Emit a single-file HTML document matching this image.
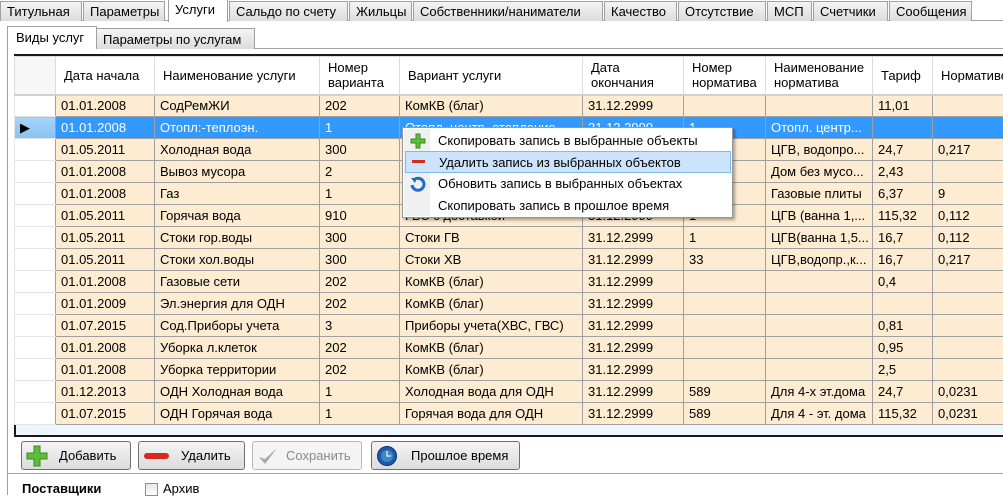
<!DOCTYPE html><html><head><meta charset="utf-8"><style>
*{box-sizing:border-box;margin:0;padding:0}
body{width:1003px;height:495px;overflow:hidden;background:#fff;font:13px "Liberation Sans",sans-serif;color:#000;position:relative}
.tabs{position:absolute;left:0;top:0;height:21px;width:1003px;border-bottom:1px solid #a0a0a0;background:#fff}
.tab{position:absolute;top:1px;height:20px;background:linear-gradient(#f4f4f4,#dcdcdc);border:1px solid #a0a0a0;border-bottom:none;padding:2px 6px;white-space:nowrap}
.tab.act{top:-1px;height:23px;background:#fff;z-index:2}
.stab{position:absolute;height:21px;border:1px solid #a0a0a0;border-bottom:none;padding:3px 6px;white-space:nowrap}
.wrap{position:absolute;left:14px;top:56px;width:989px;height:380px;overflow:hidden}
table{position:absolute;left:0;top:0;width:997px;border-collapse:collapse;table-layout:fixed}
td{border:1px solid #a0a0a0;height:22px;padding:0 4px 0 5px;white-space:nowrap;overflow:hidden;background:#fdebd2}
th{border:1px solid #dcdcdc;border-bottom:2px solid #d0d0d0;height:38px;font-weight:normal;text-align:left;padding:0 4px 0 8px;background:#fff;line-height:15px;vertical-align:middle;white-space:nowrap;overflow:hidden}
td.rh{background:#fff;border:1px solid #e4e4e4;border-right:1px solid #a0a0a0}
tr.sel td{background:#3399ff;color:#fff}
tr.sel td.rh{background:linear-gradient(#a8d4f8,#86c2f2);color:#000}
.menu{position:absolute;left:402px;top:127px;width:331px;height:91px;background:#fff;border:1px solid #979797;box-shadow:2px 2px 3px rgba(0,0,0,.35);z-index:5}
.menu .strip{position:absolute;left:1px;top:1px;bottom:1px;width:26px;background:#f0f0f0}
.mi{position:absolute;left:2px;width:326px;height:22px;padding:3px 0 0 33px}
.mi.h{background:#cce4fb;border:1px solid #80b9ee}
.btn{position:absolute;top:441px;height:29px;border:1px solid #707070;border-radius:3px;background:linear-gradient(#f4f4f4,#dcdcdc);padding-top:6px}
</style></head><body>
<div class="tabs">
<div class="tab" style="left:0;width:82px">Титульная</div>
<div class="tab" style="left:83px;width:82px">Параметры</div>
<div class="tab act" style="left:168px;width:60px">Услуги</div>
<div class="tab" style="left:229px;width:119px">Сальдо по счету</div>
<div class="tab" style="left:349px;width:63px">Жильцы</div>
<div class="tab" style="left:413px;width:190px">Собственники/наниматели</div>
<div class="tab" style="left:604px;width:73px">Качество</div>
<div class="tab" style="left:678px;width:88px">Отсутствие</div>
<div class="tab" style="left:767px;width:45px">МСП</div>
<div class="tab" style="left:813px;width:75px">Счетчики</div>
<div class="tab" style="left:889px;width:83px">Сообщения</div>
</div>
<div style="position:absolute;left:7px;top:48px;width:1px;height:447px;background:#a0a0a0"></div>
<div style="position:absolute;left:7px;top:48px;width:996px;height:1px;background:#a0a0a0"></div>
<div class="stab" style="left:7px;top:26px;width:90px;height:23px;background:#fff;z-index:2;padding-left:8px">Виды услуг</div>
<div class="stab" style="left:96px;top:28px;width:159px;background:linear-gradient(#f4f4f4,#dcdcdc)">Параметры по услугам</div>
<div style="position:absolute;left:14px;top:54px;width:995px;height:383px;border:2px solid #1a1a1a;background:#eef5fd"></div>
<div class="wrap">
<table>
<colgroup><col style="width:41px"><col style="width:99px"><col style="width:165px"><col style="width:80px"><col style="width:183px"><col style="width:101px"><col style="width:82px"><col style="width:107px"><col style="width:60px"><col style="width:79px"></colgroup>
<tr><th style="background:#f7f7f7"></th><th>Дата начала</th><th>Наименование услуги</th><th>Номер<br>варианта</th><th>Вариант услуги</th><th>Дата<br>окончания</th><th>Номер<br>норматива</th><th>Наименование<br>норматива</th><th>Тариф</th><th>Нормативе</th></tr>
<tr><td class="rh"></td><td>01.01.2008</td><td>СодРемЖИ</td><td>202</td><td>КомКВ (благ)</td><td>31.12.2999</td><td></td><td></td><td>11,01</td><td></td></tr>
<tr class="sel"><td class="rh">&#9654;</td><td>01.01.2008</td><td>Отопл:-теплоэн.</td><td>1</td><td>Отопл. центр. отопление</td><td>31.12.2999</td><td>1</td><td>Отопл. центр...</td><td></td><td></td></tr>
<tr><td class="rh"></td><td>01.05.2011</td><td>Холодная вода</td><td>300</td><td></td><td></td><td></td><td>ЦГВ, водопро...</td><td>24,7</td><td>0,217</td></tr>
<tr><td class="rh"></td><td>01.01.2008</td><td>Вывоз мусора</td><td>2</td><td></td><td></td><td></td><td>Дом без мусо...</td><td>2,43</td><td></td></tr>
<tr><td class="rh"></td><td>01.01.2008</td><td>Газ</td><td>1</td><td></td><td></td><td></td><td>Газовые плиты</td><td>6,37</td><td>9</td></tr>
<tr><td class="rh"></td><td>01.05.2011</td><td>Горячая вода</td><td>910</td><td>ГВС с доставкой</td><td>31.12.2999</td><td>1</td><td>ЦГВ (ванна 1,...</td><td>115,32</td><td>0,112</td></tr>
<tr><td class="rh"></td><td>01.05.2011</td><td>Стоки гор.воды</td><td>300</td><td>Стоки ГВ</td><td>31.12.2999</td><td>1</td><td>ЦГВ(ванна 1,5...</td><td>16,7</td><td>0,112</td></tr>
<tr><td class="rh"></td><td>01.05.2011</td><td>Стоки хол.воды</td><td>300</td><td>Стоки ХВ</td><td>31.12.2999</td><td>33</td><td>ЦГВ,водопр.,к...</td><td>16,7</td><td>0,217</td></tr>
<tr><td class="rh"></td><td>01.01.2008</td><td>Газовые сети</td><td>202</td><td>КомКВ (благ)</td><td>31.12.2999</td><td></td><td></td><td>0,4</td><td></td></tr>
<tr><td class="rh"></td><td>01.01.2009</td><td>Эл.энергия для ОДН</td><td>202</td><td>КомКВ (благ)</td><td>31.12.2999</td><td></td><td></td><td></td><td></td></tr>
<tr><td class="rh"></td><td>01.07.2015</td><td>Сод.Приборы учета</td><td>3</td><td>Приборы учета(ХВС, ГВС)</td><td>31.12.2999</td><td></td><td></td><td>0,81</td><td></td></tr>
<tr><td class="rh"></td><td>01.01.2008</td><td>Уборка л.клеток</td><td>202</td><td>КомКВ (благ)</td><td>31.12.2999</td><td></td><td></td><td>0,95</td><td></td></tr>
<tr><td class="rh"></td><td>01.01.2008</td><td>Уборка территории</td><td>202</td><td>КомКВ (благ)</td><td>31.12.2999</td><td></td><td></td><td>2,5</td><td></td></tr>
<tr><td class="rh"></td><td>01.12.2013</td><td>ОДН Холодная вода</td><td>1</td><td>Холодная вода для ОДН</td><td>31.12.2999</td><td>589</td><td>Для 4-х эт.дома</td><td>24,7</td><td>0,0231</td></tr>
<tr><td class="rh"></td><td>01.07.2015</td><td>ОДН Горячая вода</td><td>1</td><td>Горячая вода для ОДН</td><td>31.12.2999</td><td>589</td><td>Для 4 - эт. дома</td><td>115,32</td><td>0,0231</td></tr>
</table>
</div>
<div class="menu"><div class="strip"></div>
<div class="mi" style="top:2px"><svg style="position:absolute;left:5px;top:3px" width="16" height="16"><path d="M6 1h4v5h5v4h-5v5H6v-5H1V6h5z" fill="#5cbf3a" stroke="#3a8a22"/></svg>Скопировать запись в выбранные объекты</div>
<div class="mi h" style="top:23px"><svg style="position:absolute;left:5px;top:6px" width="16" height="8"><rect x="1" y="2" width="13" height="3" fill="#d9291c"/></svg>Удалить запись из выбранных объектов</div>
<div class="mi" style="top:45px"><svg style="position:absolute;left:4px;top:3px" width="18" height="16"><path d="M3 9a6 6 0 1 0 3-6" fill="none" stroke="#1e6ec8" stroke-width="3"/><path d="M2 2l6 0-2 5z" fill="#1e6ec8"/></svg>Обновить запись в выбранных объектах</div>
<div class="mi" style="top:67px">Скопировать запись в прошлое время</div>
</div>
<div class="btn" style="left:21px;width:110px;padding-left:37px"><svg style="position:absolute;left:4px;top:3px" width="22" height="22"><path d="M8 1h6v7h7v6h-7v7H8v-7H1V8h7z" fill="#5cbf3a" stroke="#3a8a22"/></svg>Добавить</div>
<div class="btn" style="left:138px;width:107px;padding-left:42px"><svg style="position:absolute;left:4px;top:9px" width="28" height="10"><rect x="1" y="2" width="25" height="6" rx="3" fill="#d9291c"/></svg>Удалить</div>
<div class="btn" style="left:252px;width:110px;padding-left:33px;color:#8a8a8a;border-color:#b8b8b8;background:#f4f4f4"><svg style="position:absolute;left:4px;top:3px" width="22" height="22"><path d="M2 12l6 7L20 3l-12 11z" fill="#a8a8a8"/></svg>Сохранить</div>
<div class="btn" style="left:371px;width:149px;padding-left:39px"><svg style="position:absolute;left:4px;top:3px" width="22" height="22"><circle cx="11" cy="11" r="9.5" fill="#1e5aa8" stroke="#0d3470"/><circle cx="11" cy="11" r="6" fill="#3b86d4"/><path d="M11 6v5h4" stroke="#d8e8a0" stroke-width="1.5" fill="none"/></svg>Прошлое время</div>
<div style="position:absolute;left:7px;top:473px;width:996px;height:1px;background:#a0a0a0"></div>
<div style="position:absolute;left:22px;top:481px;font-weight:bold">Поставщики</div>
<div style="position:absolute;left:145px;top:483px;width:13px;height:13px;border:1px solid #8e8e8e;background:linear-gradient(#e6e6e6,#fff)"></div>
<div style="position:absolute;left:163px;top:481px">Архив</div>
</body></html>
